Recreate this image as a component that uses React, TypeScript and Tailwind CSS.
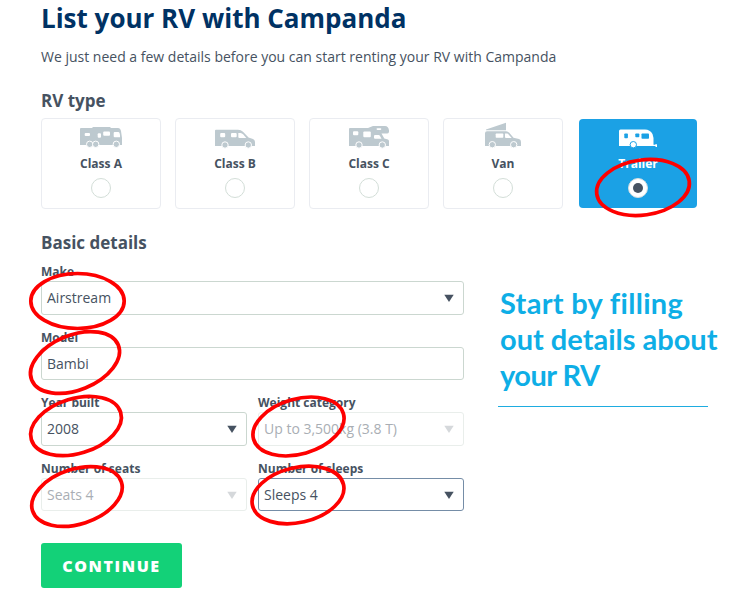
import type { ReactNode } from "react";
import clsx from "clsx";

function Wheels({ at, y = 23, ring = "white" }: { at: number[]; y?: number; ring?: string }) {
  return (
    <>
      {at.map((x) => (
        <circle key={x} cx={x} cy={y} r="3.2" fill="currentColor" stroke={ring} strokeWidth="1" />
      ))}
    </>
  );
}

function VehicleIcon({ children }: { children: ReactNode }) {
  return (
    <svg width="44" height="28" viewBox="0 0 44 28" fill="currentColor" aria-hidden>
      {children}
    </svg>
  );
}

const classA = (
  <VehicleIcon>
    <path d="M2 6H13L14 5H31L32 6H39Q41.300 6 42 9L43 16V23H1V7Q1 6 2 6Z" />
    <g fill="white">
      <rect x="5.700" y="11" width="5.300" height="3" rx="1" />
      <rect x="18.700" y="11.300" width="3.300" height="4.400" rx="1" />
      <rect x="24.200" y="9.400" width="6.800" height="4.300" rx="1" />
      <path d="M35.700 10H39.500Q40.700 10 41 13V15.300H35.700Q34.700 15.300 34.700 14.300V11Q34.700 10 35.700 10Z" />
    </g>
    <Wheels at={[10.7, 16.7, 37.3]} y={22.3} />
  </VehicleIcon>
);

const classB = (
  <VehicleIcon>
    <path d="M3 7.700H25Q28 7.700 30 9.700L35.500 15.500L40 17Q42 17.800 42 20V24H2V8.700Q2 7.700 3 7.700Z" />
    <g fill="white">
      <rect x="7.200" y="11" width="5" height="4.300" rx="1" />
      <rect x="18" y="11" width="5.700" height="4.300" rx="1" />
      <path d="M25.300 11H27.500Q29 11 30.300 12.500L33.300 16H26.300Q25.300 16 25.300 15Z" />
    </g>
    <Wheels at={[12, 35.3]} />
  </VehicleIcon>
);

const classC = (
  <VehicleIcon>
    <path d="M3 6H21L26 4H38Q41.500 4 42 8.500V10Q41.500 11.500 40 11.500H34.500L37.300 16.500L41 17.500Q42 18 42 19V24H2V7Q2 6 3 6Z" />
    <g fill="white">
      <rect x="6" y="9.300" width="5.300" height="3.900" rx="1" />
      <rect x="16.300" y="9.600" width="7.500" height="5.600" rx="1" />
      <rect x="29.500" y="6.200" width="4.800" height="1.700" rx="0.800" />
      <path d="M28 13H31.500Q32.500 13 33 14L34.500 16.700H28Q27 16.700 27 15.700V14Q27 13 28 13Z" />
    </g>
    <Wheels at={[12, 35.3]} />
  </VehicleIcon>
);

const van = (
  <VehicleIcon>
    <path d="M5 7.500L25 0.700V8.300H5Z" />
    <path d="M6 9.300H25Q27 9.300 28.500 11L32.500 15.700L38 17Q40 17.700 40 20V24H4V11.300Q4 9.300 6 9.300Z" />
    <g fill="white">
      <rect x="14.700" y="11.600" width="7.600" height="4.100" rx="0.600" />
      <path d="M24 11.600H26Q27 11.600 28 13L30.700 16H25Q24 16 24 15Z" />
    </g>
    <Wheels at={[11.3, 32.7]} y={22.7} />
  </VehicleIcon>
);

const trailer = (
  <VehicleIcon>
    <path d="M4.500 7.500H29Q34 7.500 36.500 12L37.500 16V22.700H39L39.500 22.200H41V25H39.500V24H3V9Q3 7.500 4.500 7.500Z" />
    <g fill="#1ba1e5">
      <rect x="8.300" y="11.500" width="3.600" height="4.800" rx="0.800" />
      <rect x="19.300" y="11.500" width="4" height="3.700" rx="0.800" />
      <rect x="25.500" y="11.500" width="7.500" height="5.200" rx="0.800" />
    </g>
    <Wheels at={[17.3]} y={22.7} ring="#1ba1e5" />
  </VehicleIcon>
);

const rvTypes = [
  { label: "Class A", icon: classA },
  { label: "Class B", icon: classB },
  { label: "Class C", icon: classC },
  { label: "Van", icon: van },
  { label: "Trailer", icon: trailer, selected: true },
];

function TypeCard({ label, icon, selected }: { label: string; icon: ReactNode; selected?: boolean }) {
  return (
    <button
      className={clsx(
        "flex flex-col items-center rounded-[4px]",
        selected
          ? "ml-0.5 mt-px h-[89px] w-[118px] bg-[#1ba1e5] pt-[3px] text-white"
          : "h-[91px] w-[120px] border border-[#eaecf1] pt-[3px] text-[#bdc9cf]",
      )}
    >
      {icon}
      <span
        className={clsx(
          "mt-[6px] text-[12px] font-bold leading-4",
          selected ? "text-white" : "text-[#465261]",
        )}
      >
        {label}
      </span>
      <span
        className={clsx(
          "mt-[6px] flex size-5 items-center justify-center rounded-full border bg-white",
          selected ? "border-[#d5dde0]" : "border-[#d3ded8]",
        )}
      >
        {selected && <span className="size-2.5 rounded-full bg-[#465261]" />}
      </span>
    </button>
  );
}

type FieldProps = {
  label: string;
  value: string;
  select?: boolean;
  disabled?: boolean;
  focused?: boolean;
  short?: boolean;
  className?: string;
};

function Field({ label, value, select, disabled, focused, short, className }: FieldProps) {
  return (
    <div className={clsx("flex flex-col", className)}>
      <span className="h-[17px] whitespace-nowrap text-[12px] font-bold leading-[16px] text-[#465261]">
        {label}
      </span>
      <div
        className={clsx(
          "flex items-center justify-between rounded-[3px] border pl-[5px] pr-[9px] text-[14px] leading-5",
          short ? "h-[33px]" : "h-[34px]",
          disabled ? "border-[#e9eeeb] text-[#a9aeb4]" : "text-[#465261]",
          !disabled && (focused ? "border-[#758da7]" : "border-[#cbd7d0]"),
        )}
      >
        <span className="whitespace-nowrap">{value}</span>
        {select && (
          <svg
            width="10"
            height="8"
            viewBox="0 0 10 8"
            className={disabled ? "text-[#d5d8db]" : "text-[#465261]"}
            aria-hidden
          >
            <path d="M0.300 0.700H9.700L5 8Z" fill="currentColor" />
          </svg>
        )}
      </div>
    </div>
  );
}

// hand-drawn style highlights around the filled-in fields
const highlights = [
  { x: 643, y: 187.5, angle: -8 },
  { x: 77.5, y: 301, angle: 0 },
  { x: 75, y: 362.5, angle: -22 },
  { x: 76, y: 426, angle: -17 },
  { x: 298.5, y: 426.5, angle: -16 },
  { x: 77, y: 496.5, angle: -18 },
  { x: 298, y: 495, angle: -13 },
];

function Highlights() {
  return (
    <svg
      width="732"
      height="602"
      viewBox="0 0 732 602"
      fill="none"
      className="pointer-events-none absolute left-0 top-0"
      aria-hidden
    >
      {highlights.map(({ x, y, angle }) => (
        <ellipse
          key={`${x}-${y}`}
          cx={x}
          cy={y}
          rx="46.700"
          ry="27.500"
          stroke="#fe0000"
          strokeWidth="3.700"
          transform={`rotate(${angle} ${x} ${y})`}
        />
      ))}
    </svg>
  );
}

export default function App() {
  return (
    <main className="relative h-[602px] w-[732px] overflow-hidden bg-white pl-[41px] font-['Open_Sans',sans-serif] text-[#465261]">
      <h1 className="text-[26px] font-bold leading-[36px] text-[#003264]">
        List your RV with Campanda
      </h1>
      <p className="mt-[11px] text-[14px] leading-5">
        We just need a few details before you can start renting your RV with Campanda
      </p>

      <h2 className="mt-[22px] text-[17px] font-bold leading-6">RV type</h2>
      <div className="mt-[5px] flex h-[91px] gap-[14px]">
        {rvTypes.map((type) => (
          <TypeCard key={type.label} {...type} />
        ))}
      </div>

      <h2 className="mt-[22px] text-[17px] font-bold leading-6">Basic details</h2>
      <div className="mt-[9px] flex">
        <div className="flex w-[423px] flex-col gap-[15px]">
          <Field label="Make" value="Airstream" select />
          <Field label="Model" value="Bambi" short />
          <div className="flex gap-[11px]">
            <Field label="Year built" value="2008" select className="w-[206px]" />
            <Field label="Weight category" value="Up to 3,500kg (3.8 T)" select disabled className="w-[206px]" />
          </div>
          <div className="flex gap-[11px]">
            <Field label="Number of seats" value="Seats 4" select disabled short className="w-[206px]" />
            <Field label="Number of sleeps" value="Sleeps 4" select focused short className="w-[206px]" />
          </div>
        </div>

        <aside className="ml-[34px] mt-[21px] w-[222px]">
          <p className="pl-[2px] font-[Lato,sans-serif] text-[29px] font-bold leading-[36px] text-[#0eaee6]">
            <span className="block whitespace-nowrap tracking-[0.3px] [font-variant-ligatures:common-ligatures]">
              Start by filling
            </span>
            <span className="block whitespace-nowrap">out details about</span>
            <span className="block whitespace-nowrap tracking-[-0.5px]">your RV</span>
          </p>
          <div className="mt-[13px] h-px w-[210px] bg-[#1eace0]" />
        </aside>
      </div>

      <button className="mt-[32px] h-[45px] w-[141px] rounded-[3px] bg-[#13d178] text-[16px] font-extrabold tracking-[1.600px] text-white">
        CONTINUE
      </button>
      <Highlights />
    </main>
  );
}
